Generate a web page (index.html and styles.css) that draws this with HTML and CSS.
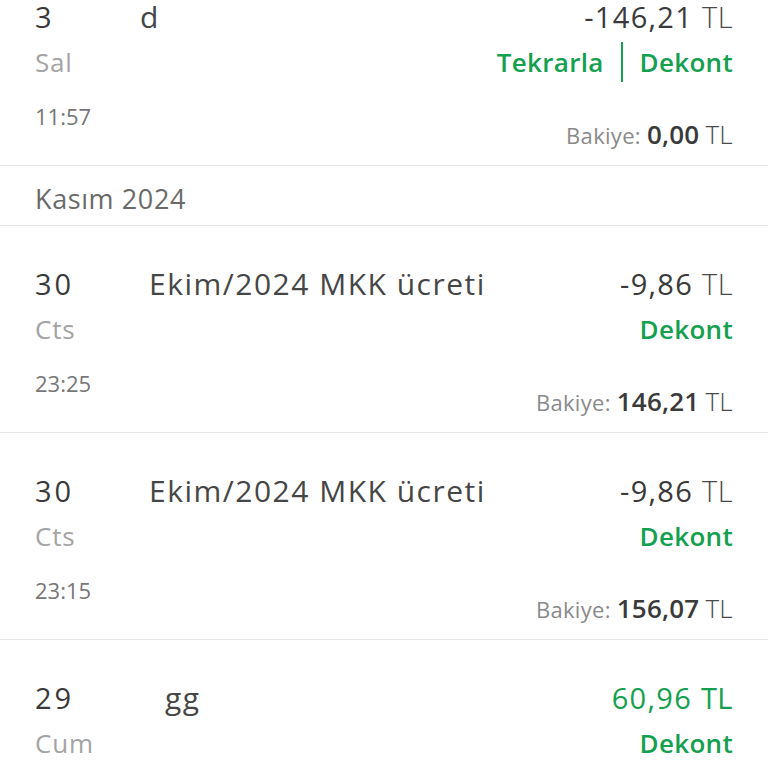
FILE: index.html
```html
<!DOCTYPE html>
<html lang="tr">
<head>
<meta charset="UTF-8" />
<meta name="viewport" content="width=device-width, initial-scale=1" />
<title>Hesap Hareketleri</title>
<link rel="stylesheet" href="styles.css">
</head>
<body>
  <div class="list">
    <!-- Aralık'tan kalan son hareket, yukarı kaymış -->
    <div class="tx">
      <div class="date">
        <span class="day">3</span>
        <span class="weekday">Sal</span>
        <span class="time">11:57</span>
      </div>
      <div class="desc desc-d">d</div>
      <div class="side">
        <span class="amount">-146,21 <small>TL</small></span>
        <div class="links">
          <a class="link">Tekrarla</a>
          <span class="sep"></span>
          <a class="link">Dekont</a>
        </div>
        <span class="balance">Bakiye: <b>0,00</b> <small>TL</small></span>
      </div>
    </div>

    <div class="month">Kasım 2024</div>

    <div class="tx">
      <div class="date">
        <span class="day">30</span>
        <span class="weekday">Cts</span>
        <span class="time">23:25</span>
      </div>
      <div class="desc">Ekim/2024 MKK ücreti</div>
      <div class="side">
        <span class="amount">-9,86 <small>TL</small></span>
        <div class="links"><a class="link">Dekont</a></div>
        <span class="balance">Bakiye: <b>146,21</b> <small>TL</small></span>
      </div>
    </div>

    <div class="tx">
      <div class="date">
        <span class="day">30</span>
        <span class="weekday">Cts</span>
        <span class="time">23:15</span>
      </div>
      <div class="desc">Ekim/2024 MKK ücreti</div>
      <div class="side">
        <span class="amount">-9,86 <small>TL</small></span>
        <div class="links"><a class="link">Dekont</a></div>
        <span class="balance">Bakiye: <b>156,07</b> <small>TL</small></span>
      </div>
    </div>

    <div class="tx tx-last">
      <div class="date">
        <span class="day">29</span>
        <span class="weekday">Cum</span>
      </div>
      <div class="desc desc-gg">gg</div>
      <div class="side">
        <span class="amount plus">60,96 <small>TL</small></span>
        <div class="links"><a class="link">Dekont</a></div>
      </div>
    </div>
  </div>
</body>
</html>
```

FILE: styles.css
```css
* {
  box-sizing: border-box;
  margin: 0;
  padding: 0;
}
html, body {
  height: 100%;
  background: #fff;
  overflow: hidden;
  font-family: "Open Sans", Lato, sans-serif;
  color: #3d3d3d;
}

/* --- List --- */
.list {
  display: flex;
  flex-direction: column;
  margin-top: -41px; /* scrolled */
}

/* --- Transaction row --- */
.tx {
  display: flex;
  height: 207px;
  padding: 43px 35px 0;
  border-bottom: 1px solid #e6e6e6;
}
.tx-last {
  height: auto;
  border-bottom: none;
}
.date {
  display: flex;
  flex-direction: column;
  width: 114px;
}
.day {
  font-size: 29px;
  line-height: 30px;
  letter-spacing: 3px;
  color: #3a3a3a;
}
.weekday {
  font-size: 26px;
  line-height: 34px;
  margin-top: 13px;
  letter-spacing: 0.8px;
  color: #a4a4a4;
}
.time {
  font-size: 22px;
  line-height: 30px;
  margin-top: 22px;
  color: #777;
}
.desc {
  flex: 1;
  font-size: 30px;
  line-height: 30px;
  letter-spacing: 1.5px;
  color: #464646;
}
.desc-d { margin-left: -9px; }
.desc-gg { margin-left: 16px; }

.side {
  display: flex;
  flex-direction: column;
  align-items: flex-end;
}
.amount {
  font-size: 29px;
  line-height: 30px;
  letter-spacing: 1.3px;
  color: #3a3a3a;
  white-space: nowrap;
}
.amount small {
  font-size: 29px;
  font-weight: 300;
  letter-spacing: 0.5px;
  color: #4a4a4a;
}
.amount.plus, .amount.plus small { color: #14a04f; }
.amount.plus small { font-weight: 400; }

.links {
  display: flex;
  align-items: center;
  height: 34px;
  gap: 17px;
  margin-top: 13px;
}
.link {
  font-size: 26px;
  line-height: 34px;
  font-weight: 600;
  letter-spacing: 0.3px;
  color: #14a04f;
}
.sep {
  width: 2px;
  height: 40px;
  background: #14a04f;
}
.balance {
  margin-top: 39px;
  font-size: 22px;
  line-height: 32px;
  letter-spacing: 0.3px;
  color: #8a8a8a;
  white-space: nowrap;
}
.balance b {
  font-size: 26px;
  font-weight: 600;
  letter-spacing: 0.2px;
  color: #3a3a3a;
}
.balance small {
  font-size: 26px;
  font-weight: 300;
  color: #4a4a4a;
}

/* --- Month header --- */
.month {
  height: 60px;
  padding: 5px 35px 0;
  display: flex;
  align-items: center;
  font-size: 27px;
  letter-spacing: 0.6px;
  color: #6a6a6a;
  border-bottom: 1px solid #e6e6e6;
}
```
